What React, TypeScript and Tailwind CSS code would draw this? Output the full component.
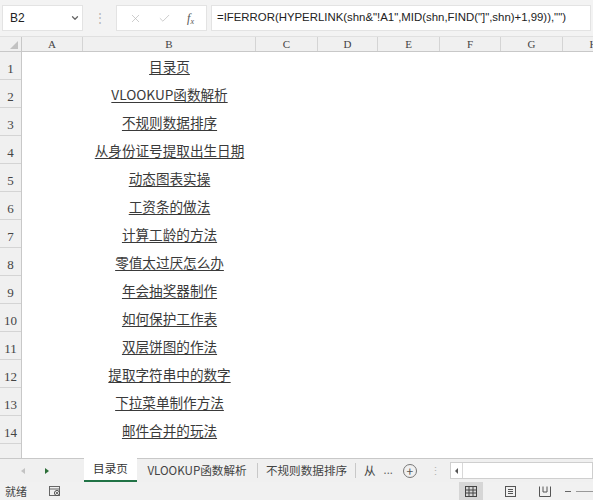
import { ChevronDown, X, Check } from 'lucide-react'

const cols = [
  { name: 'A', w: 'w-[61px]' },
  { name: 'B', w: 'w-[173px]' },
  { name: 'C', w: 'w-[62px]' },
  { name: 'D', w: 'w-[60px]' },
  { name: 'E', w: 'w-[62px]' },
  { name: 'F', w: 'w-[61px]' },
  { name: 'G', w: 'w-[62px]' },
  { name: 'H', w: 'w-[62px]' },
]

const links = [
  '目录页',
  'VLOOKUP函数解析',
  '不规则数据排序',
  '从身份证号提取出生日期',
  '动态图表实操',
  '工资条的做法',
  '计算工龄的方法',
  '零值太过厌怎么办',
  '年会抽奖器制作',
  '如何保护工作表',
  '双层饼图的作法',
  '提取字符串中的数字',
  '下拉菜单制作方法',
  '邮件合并的玩法',
]

const cjk = 'font-["Noto_Sans_CJK_SC","Noto_Sans",sans-serif]'
const serif = 'font-["Liberation_Serif","DejaVu_Serif",serif]'

function FormulaBar() {
  return (
    <div className="h-[37px] bg-[#f3f3f3] flex items-center gap-0 px-[2px] border-b border-[#e0e0e0]">
      <div className="w-[81px] h-[26px] bg-white border border-[#e3e3e3] flex items-center justify-between pl-[7px] pr-[2px]">
        <span className="text-[12px] text-[#222] font-['Liberation_Sans',sans-serif]">B2</span>
        <ChevronDown size={10} strokeWidth={3} className="text-[#666]" />
      </div>
      <div className="w-[33px] flex justify-center text-[#b5b5b5] text-[12px] leading-none">⋮</div>
      <div className="w-[91px] h-[26px] bg-white border border-[#e3e3e3] flex items-center justify-around px-[4px]">
        <X size={13} strokeWidth={1.3} className="text-[#b8b8b8]" />
        <Check size={13} strokeWidth={1.3} className="text-[#b8b8b8]" />
        <span className={`${serif} italic text-[12px] text-[#555]`}>
          f<sub className="text-[8px]">x</sub>
        </span>
      </div>
      <div className="ml-[4px] flex-1 h-[26px] bg-white border border-[#e3e3e3] flex items-center pl-[5px] overflow-hidden whitespace-nowrap">
        <span className="text-[11.4px] text-[#222] font-['Liberation_Sans',sans-serif]">
          =IFERROR(HYPERLINK(shn&amp;"!A1",MID(shn,FIND("]",shn)+1,99)),"")
        </span>
      </div>
    </div>
  )
}

function ColumnHeaders() {
  return (
    <div className="h-[15px] flex bg-[#f0f0f0] border-b border-[#c8c8c8] overflow-hidden">
      <div className="w-[22px] shrink-0 border-r border-[#c8c8c8] flex items-end justify-end pr-[3px] pb-[2px]">
        <div className="w-0 h-0 border-l-[8px] border-l-transparent border-b-[8px] border-b-[#c2c2c2]" />
      </div>
      {cols.map((c) => (
        <div
          key={c.name}
          className={`${c.w} shrink-0 border-r border-[#d4d4d4] flex items-center justify-center text-[11px] text-[#444] ${serif}`}
        >
          {c.name}
        </div>
      ))}
    </div>
  )
}

function Sheet() {
  return (
    <div className="h-[406px] flex overflow-hidden bg-white">
      <div className="w-[22px] bg-[#f0f0f0] border-r border-[#c8c8c8] flex flex-col">
        {links.map((_, i) => (
          <div
            key={i}
            className={`h-[28px] shrink-0 border-b border-[#d4d4d4] flex items-end justify-center pb-[1px] text-[13px] text-[#444] ${serif}`}
          >
            {i + 1}
          </div>
        ))}
        <div className="flex-1" />
      </div>
      <div className="w-[61px]" />
      <div className="w-[173px] flex flex-col">
        {links.map((t) => (
          <div key={t} className="h-[28px] shrink-0 flex items-start justify-center pt-[4px]">
            <span className={`${cjk} text-[13.6px] text-[#3a3a3a] underline underline-offset-2 decoration-[#3a3a3a] whitespace-nowrap`}>
              {t}
            </span>
          </div>
        ))}
      </div>
      <div className="flex-1" />
    </div>
  )
}

function TabBar() {
  return (
    <div className={`h-[24px] flex items-stretch bg-[#f0f0f0] border-t border-[#c8c8c8] ${cjk}`}>
      <div className="w-[84px] flex items-center pl-[21px] gap-[20px]">
        <div className="w-0 h-0 border-y-[3px] border-y-transparent border-r-[4px] border-r-[#c3c3c3]" />
        <div className="w-0 h-0 border-y-[3px] border-y-transparent border-l-[4px] border-l-[#2c6e38]" />
      </div>
      <div className="w-[53px] bg-white border-b-2 border-[#217346] flex items-center justify-center text-[11.6px] text-[#333] -mt-px">
        目录页
      </div>
      <div className="w-[120px] flex items-center justify-center text-[11.6px] text-[#444]">VLOOKUP函数解析</div>
      <div className="w-px bg-[#c8c8c8] my-[4px]" />
      <div className="w-[97px] flex items-center justify-center text-[11.6px] text-[#444]">不规则数据排序</div>
      <div className="w-px bg-[#c8c8c8] my-[4px]" />
      <div className="flex items-center pl-[8px] text-[11.6px] text-[#444]">从</div>
      <div className="flex items-center pl-[8px] text-[11px] text-[#666] pb-[3px]">...</div>
      <div className="flex items-center pl-[10px]">
        <div className="w-[14px] h-[14px] rounded-full border border-[#777] flex items-center justify-center text-[#555] text-[12px] leading-none">
          +
        </div>
      </div>
      <div className="flex items-center pl-[13px] text-[#b5b5b5] text-[11px]">⋮</div>
      <div className="ml-[9px] flex-1 my-[3px] bg-white border border-[#cfcfcf] flex items-center">
        <div className="w-[12px] h-full border-r border-[#d8d8d8] flex items-center justify-center">
          <div className="w-0 h-0 border-y-[3px] border-y-transparent border-r-[3px] border-r-[#555]" />
        </div>
      </div>
    </div>
  )
}

function StatusBar() {
  return (
    <div className={`h-[18px] flex items-center bg-[#f1f1f1] ${cjk}`}>
      <span className="pl-[5px] text-[11px] text-[#444]">就绪</span>
      <svg className="ml-[22px]" width="12" height="11" viewBox="0 0 12 11">
        <rect x="0.5" y="0.5" width="10" height="9" fill="none" stroke="#666" />
        <line x1="0.5" y1="3" x2="10.5" y2="3" stroke="#666" />
        <circle cx="8" cy="7" r="2.5" fill="#fff" stroke="#444" />
        <circle cx="8" cy="7" r="1" fill="#444" />
      </svg>
      <div className="flex-1" />
      <div className="w-[24px] h-full bg-[#d6d6d6] flex items-center justify-center">
        <svg width="12" height="11" viewBox="0 0 12 11">
          <rect x="0.5" y="0.5" width="11" height="10" fill="none" stroke="#444" />
          <path d="M4 0.5V10.5M8 0.5V10.5M0.5 4H11.5M0.5 7H11.5" stroke="#444" />
        </svg>
      </div>
      <div className="w-[54px] flex justify-center">
        <svg width="11" height="11" viewBox="0 0 11 11">
          <rect x="0.5" y="0.5" width="10" height="10" fill="none" stroke="#555" />
          <path d="M3 3.5H8M3 5.5H8M3 7.5H8" stroke="#555" />
        </svg>
      </div>
      <div className="w-[16px] flex justify-center">
        <svg width="12" height="11" viewBox="0 0 12 11">
          <path d="M0.5 0.5V10.5H11.5V0.5M4 0.5V6H8V0.5" fill="none" stroke="#555" />
        </svg>
      </div>
      <div className="w-[40px] flex items-center gap-[5px] pl-[12px]">
        <div className="w-[6px] h-px bg-[#666]" />
        <div className="flex-1 h-px bg-[#999]" />
      </div>
    </div>
  )
}

export default function App() {
  return (
    <div className="w-[593px] h-[500px] flex flex-col overflow-hidden bg-white">
      <FormulaBar />
      <ColumnHeaders />
      <Sheet />
      <TabBar />
      <StatusBar />
    </div>
  )
}
